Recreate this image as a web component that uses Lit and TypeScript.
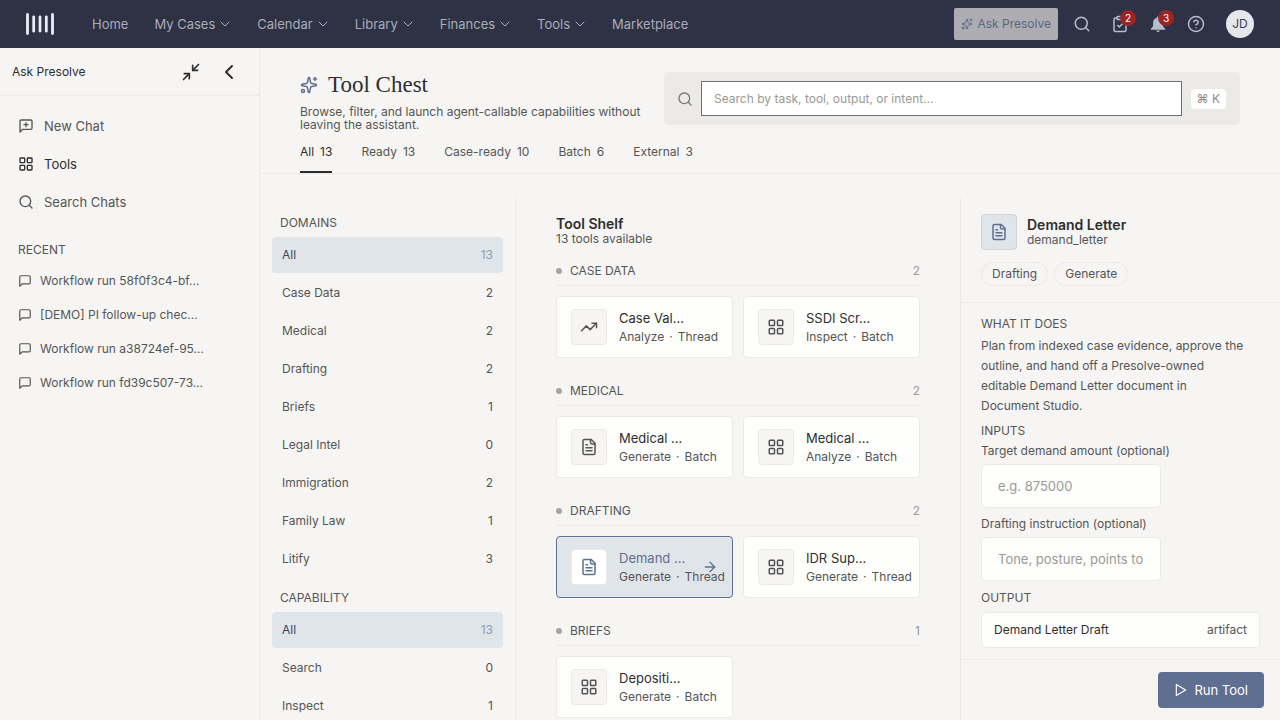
import { LitElement, html, css, svg, nothing } from "lit";
import { customElement, property, state } from "lit/decorators.js";
import { classMap } from "lit/directives/class-map.js";

const ICONS: Record<string, unknown> = {
  chevronDown: svg`<path d="m4 8 8 8 8-8"/>`,
  chevronLeft: svg`<path d="m15 18-6-6 6-6"/>`,
  sparkles: svg`<path d="M11.017 2.814a1 1 0 0 1 1.966 0l1.051 5.558a2 2 0 0 0 1.594 1.594l5.558 1.051a1 1 0 0 1 0 1.966l-5.558 1.051a2 2 0 0 0-1.594 1.594l-1.051 5.558a1 1 0 0 1-1.966 0l-1.051-5.558a2 2 0 0 0-1.594-1.594l-5.558-1.051a1 1 0 0 1 0-1.966l5.558-1.051a2 2 0 0 0 1.594-1.594z"/><path d="M20 2v4"/><path d="M22 4h-4"/><circle cx="4" cy="20" r="2"/>`,
  search: svg`<circle cx="11" cy="11" r="8"/><path d="m21 21-4.3-4.3"/>`,
  clipboard: svg`<rect x="8" y="2" width="8" height="4" rx="1"/><path d="M16 4h2a2 2 0 0 1 2 2v14a2 2 0 0 1-2 2H6a2 2 0 0 1-2-2V6a2 2 0 0 1 2-2h2"/><path d="m9 14 2 2 4-4"/>`,
  bell: svg`<path fill="currentColor" stroke="none" d="M12 2a1.6 1.6 0 0 0-1.6 1.7C7.500 4.400 5.500 7 5.500 10v5L2.500 18.200V19.500h19v-1.300L18.500 15v-5c0-3-2-5.600-4.900-6.300A1.600 1.600 0 0 0 12 2zM9.800 20.500a2.200 2.200 0 0 0 4.400 0z"/>`,
  help: svg`<circle cx="12" cy="12" r="10"/><path d="M9.090 9a3 3 0 0 1 5.830 1c0 2-3 3-3 3"/><path d="M12 17h.01"/>`,
  minimize: svg`<path d="M4 14h6v6"/><path d="M20 10h-6V4"/><path d="m14 10 7-7"/><path d="m3 21 7-7"/>`,
  newChat: svg`<path d="M21 15a2 2 0 0 1-2 2H7l-4 4V5a2 2 0 0 1 2-2h14a2 2 0 0 1 2 2z"/><path d="M12 7v6"/><path d="M9 10h6"/>`,
  chat: svg`<path d="M21 15a2 2 0 0 1-2 2H7l-4 4V5a2 2 0 0 1 2-2h14a2 2 0 0 1 2 2z"/>`,
  grid: svg`<rect x="3" y="3" width="7" height="7" rx="1"/><rect x="14" y="3" width="7" height="7" rx="1"/><rect x="14" y="14" width="7" height="7" rx="1"/><rect x="3" y="14" width="7" height="7" rx="1"/>`,
  trend: svg`<path d="M16 7h6v6"/><path d="m22 7-8.500 8.500-5-5L2 17"/>`,
  file: svg`<path d="M15 2H6a2 2 0 0 0-2 2v16a2 2 0 0 0 2 2h12a2 2 0 0 0 2-2V7z"/><path d="M14 2v4a2 2 0 0 0 2 2h4"/><path d="M10 9H8"/><path d="M16 13H8"/><path d="M16 17H8"/>`,
  arrow: svg`<path d="M5 12h14"/><path d="m12 5 7 7-7 7"/>`,
  play: svg`<path d="M4 2.500v19l16-9.500z"/>`,
};

@customElement("ui-icon")
export class UiIcon extends LitElement {
  @property() name = "grid";
  @property({ type: Number }) size = 16;
  @property({ type: Number }) weight = 2;

  static styles = css`
    :host { display: inline-flex; flex: none; }
    svg { display: block; fill: none; stroke: currentColor; stroke-linecap: round; stroke-linejoin: round; }
  `;

  render() {
    return html`<svg width=${this.size} height=${this.size} viewBox="0 0 24 24" stroke-width=${this.weight} aria-hidden="true">${ICONS[this.name]}</svg>`;
  }
}

type Row = [label: string, count: number];
type Tool = { icon: string; title: string; kind: string; mode: string };

const NAV: [string, boolean][] = [
  ["Home", false], ["My Cases", true], ["Calendar", true], ["Library", true],
  ["Finances", true], ["Tools", true], ["Marketplace", false],
];
const RECENT = ["Workflow run 58f0f3c4-bf…", "[DEMO] PI follow-up chec…", "Workflow run a38724ef-95…", "Workflow run fd39c507-73…"];
const TABS: Row[] = [["All", 13], ["Ready", 13], ["Case-ready", 10], ["Batch", 6], ["External", 3]];
const DOMAINS: Row[] = [["All", 13], ["Case Data", 2], ["Medical", 2], ["Drafting", 2], ["Briefs", 1], ["Legal Intel", 0], ["Immigration", 2], ["Family Law", 1], ["Litify", 3]];
const CAPABILITIES: Row[] = [["All", 13], ["Search", 0], ["Inspect", 1]];
const SHELF: { name: string; tools: Tool[] }[] = [
  { name: "Case Data", tools: [
    { icon: "trend", title: "Case Val…", kind: "Analyze", mode: "Thread" },
    { icon: "grid", title: "SSDI Scr…", kind: "Inspect", mode: "Batch" } ] },
  { name: "Medical", tools: [
    { icon: "file", title: "Medical …", kind: "Generate", mode: "Batch" },
    { icon: "grid", title: "Medical …", kind: "Analyze", mode: "Batch" } ] },
  { name: "Drafting", tools: [
    { icon: "file", title: "Demand …", kind: "Generate", mode: "Thread" },
    { icon: "grid", title: "IDR Sup…", kind: "Generate", mode: "Thread" } ] },
  { name: "Briefs", tools: [
    { icon: "grid", title: "Depositi…", kind: "Generate", mode: "Batch" } ] },
];

@customElement("app-root")
export class AppRoot extends LitElement {
  @state() private tab = "All";
  @state() private domain = "All";
  @state() private capability = "All";
  @state() private selected = "Drafting/0";

  static styles = css`
    :host {
      --ink: #2e2e2e;
      --text: #555555;
      --line: #ebeae8;
      --blue: #5f6f92;
      --tint: #e0e5ea;
      display: flex;
      flex-direction: column;
      height: 100vh;
      overflow: hidden;
      background: #f6f5f3;
      color: var(--text);
      font: 400 13px/20px Inter, "Liberation Sans", sans-serif;
    }
    *, *::before, *::after { box-sizing: border-box; }
    h1, h2, h3, p, ul { margin: 0; padding: 0; font-weight: 400; }
    ul { list-style: none; }
    a { color: inherit; text-decoration: none; }
    button, input { font: inherit; color: inherit; margin: 0; }
    button { border: 0; padding: 0; background: none; text-align: left; cursor: pointer; }

    .topbar { display: flex; align-items: center; flex: none; height: 48px; padding: 0 26px 0 25px; background: #2e3244; color: #a9acb8; }
    .logo { display: flex; width: 30px; margin-right: 37px; }
    .nav { display: flex; flex: 1; gap: 26px; }
    .nav-link { display: flex; align-items: center; gap: 4px; }
    .actions { display: flex; align-items: center; gap: 18px; }
    .ask { display: flex; align-items: center; gap: 4px; height: 32px; padding: 0 7px; border-radius: 2px; background: #acacb2; color: #5c6783; font-size: 12px; margin-right: -4px; }
    .icon-btn { position: relative; display: flex; width: 20px; height: 20px; align-items: center; justify-content: center; color: #b5bccb; }
    .badge { position: absolute; left: 10px; top: -4px; width: 16px; height: 16px; border-radius: 50%; background: #9a2527; color: #fff; font-size: 10px; line-height: 16px; text-align: center; }
    .avatar { display: flex; align-items: center; justify-content: center; width: 28px; height: 28px; margin-left: 2px; border-radius: 50%; background: #e4e8ed; color: #3a3f52; font-size: 12px; }

    .body { display: flex; flex: 1; min-height: 0; }
    .sidebar { flex: none; width: 260px; border-right: 1px solid var(--line); }
    .side-head { display: flex; align-items: center; gap: 16px; height: 48px; padding: 0 18px 0 12px; border-bottom: 1px solid var(--line); color: var(--ink); }
    .side-title { flex: 1; font-size: 12px; }
    .side-btn { display: flex; }
    .side-nav { display: grid; gap: 2px; padding: 12px 18px 0; }
    .side-link { display: flex; align-items: center; gap: 10px; height: 36px; }
    .current { color: var(--ink); }
    .caps { font-size: 12px; line-height: 16px; text-transform: uppercase; }
    .recent-label { padding: 22px 18px 6px; }
    .recent-link { display: flex; align-items: center; gap: 8px; height: 34px; padding: 0 18px; font-size: 12px; }

    .main { display: flex; flex-direction: column; flex: 1; min-width: 0; }
    .page-head { padding: 24px 40px 0; border-bottom: 1px solid var(--line); }
    .head-row { display: grid; grid-template-columns: minmax(0, 1fr) 576px; align-items: start; }
    .title { display: flex; align-items: center; gap: 10px; height: 26px; color: var(--ink); font: 400 23px/26px "Liberation Serif", serif; }
    .title ui-icon, .picked ui-icon { color: var(--blue); }
    .subtitle { margin-top: 7px; font-size: 12px; line-height: 13px; }
    .searchbar { display: flex; align-items: center; height: 53px; padding: 0 14px 0 13px; border-radius: 4px; background: #ebeae6; color: #77777a; }
    .search-input { flex: 1; min-width: 0; height: 35px; margin: 0 9px 0 8px; padding: 0 12px; border: 1px solid #6b6f7d; border-radius: 0; background: #fff; outline: none; font-size: 12px; }
    input::placeholder { color: #9b9995; opacity: 1; }
    .kbd { padding: 0 6px; border-radius: 4px; background: #fff; font: inherit; font-size: 12px; line-height: 20px; color: #8c8a87; }
    .tabs { display: flex; gap: 29px; margin-top: 1px; }
    .tab { display: flex; gap: 6px; padding: 10px 0 9px; border-bottom: 2px solid transparent; font-size: 12px; }
    .tab.on { color: var(--ink); border-color: var(--ink); }

    .columns { display: grid; grid-template-columns: 256px minmax(0, 1fr) 320px; flex: 1; min-height: 0; padding-top: 24px; }
    .filters { min-height: 0; overflow: hidden; padding: 17px 12px 0; border-right: 1px solid var(--line); }
    .filters .caps { padding-left: 8px; }
    .filter-list { display: grid; gap: 2px; margin: 6px 0 13px; }
    .filter { display: flex; align-items: center; justify-content: space-between; width: 100%; height: 36px; padding: 0 10px; border-radius: 4px; font-size: 12px; }
    .filter.on { background: var(--tint); color: #3f465c; }
    .filter.on .count { color: #8f9bb3; }

    .shelf { min-height: 0; overflow: hidden; padding: 18px 40px 0; }
    .strong { color: var(--ink); font-size: 14px; line-height: 16px; font-weight: 600; }
    .sub { font-size: 12px; line-height: 14px; }
    .group { margin-bottom: 25px; }
    .shelf .sub { margin-bottom: 17px; }
    .group-head { display: flex; align-items: center; gap: 8px; height: 23px; padding-bottom: 7px; border-bottom: 1px solid var(--line); }
    .dot { width: 6px; height: 6px; border-radius: 50%; background: #a5a4a2; }
    .group-name { flex: 1; }
    .group-count { color: #9b9995; font-size: 12px; }
    .cards { display: grid; grid-template-columns: repeat(2, minmax(0, 1fr)); gap: 10px; margin-top: 10px; }
    .card { display: flex; align-items: center; gap: 12px; height: 62px; padding: 0 14px; border: 1px solid var(--line); border-radius: 4px; background: #fefefd; white-space: nowrap; }
    .tile { display: flex; flex: none; align-items: center; justify-content: center; width: 36px; height: 36px; border: 1px solid var(--line); border-radius: 4px; background: #f6f5f3; }
    .card-text { display: block; flex: 1; min-width: 0; }
    .card-title { display: block; color: var(--ink); font-size: 13px; line-height: 20px; }
    .card-meta { display: flex; gap: 5px; font-size: 12px; line-height: 18px; }
    .card.on { background: var(--tint); border-color: var(--blue); }
    .card.on .tile { background: #fff; }
    .card.on .card-title, .go { color: var(--blue); }

    .detail { display: flex; flex-direction: column; min-height: 0; border-left: 1px solid var(--line); }
    .detail-head { padding: 16px 20px; border-bottom: 1px solid var(--line); }
    .picked { display: flex; align-items: center; gap: 10px; }
    .picked .tile { background: var(--tint); border-color: #cdd4dc; }
    .chips { display: flex; gap: 6px; margin-top: 12px; }
    .chip { padding: 0 10px; border: 1px solid var(--line); border-radius: 12px; font-size: 12px; line-height: 22px; }
    .detail-body { flex: 1; min-height: 0; overflow: hidden; padding: 13px 20px 0; }
    .desc { margin: 4px 0 7px; padding-right: 14px; font-size: 12px; line-height: 20px; }
    .label { display: block; margin-top: 2px; font-size: 12px; line-height: 20px; }
    .field { display: block; width: 180px; height: 44px; margin: 3px 0 6px; padding: 0 16px; border: 1px solid var(--line); border-radius: 4px; background: #fefefd; outline: none; font-size: 13px; }
    .output-label { margin-top: 9px; }
    .output { display: flex; justify-content: space-between; align-items: center; height: 36px; margin-top: 6px; padding: 0 12px; border: 1px solid var(--line); border-radius: 4px; background: #fefefd; font-size: 12px; }
    .output-name { color: var(--ink); }
    .detail-foot { display: flex; justify-content: flex-end; padding: 12px 16px; border-top: 1px solid var(--line); }
    .run { display: flex; align-items: center; gap: 6px; height: 36px; padding: 0 16px; border-radius: 4px; background: var(--blue); color: #fff; }
  `;

  private filterList(rows: Row[], active: string, pick: (name: string) => void) {
    return html`<div class="filter-list">
      ${rows.map(([name, count]) => html`
        <button class=${classMap({ filter: true, on: name === active })} @click=${() => pick(name)}>
          <span>${name}</span><span class="count">${count}</span>
        </button>`)}
    </div>`;
  }

  private card(tool: Tool, id: string) {
    const on = this.selected === id;
    return html`<button class=${classMap({ card: true, on })} @click=${() => (this.selected = id)}>
      <span class=${classMap({ tile: true, go: on })}><ui-icon name=${tool.icon} size="18"></ui-icon></span>
      <span class="card-text">
        <span class="card-title">${tool.title}</span>
        <span class="card-meta"><span>${tool.kind}</span><span>·</span><span>${tool.mode}</span></span>
      </span>
      ${on ? html`<ui-icon class="go" name="arrow" size="16"></ui-icon>` : nothing}
    </button>`;
  }

  render() {
    return html`
      <header class="topbar">
        <a class="logo" href="#" aria-label="Presolve">
          <svg width="30" height="24" viewBox="0 0 30 24" stroke="#e9edf5" stroke-linecap="round" fill="none">
            <path stroke-width="2.800" d="M2.500 2.400v19.200M27.500 2.400v19.200"/>
            <path stroke-width="2.800" d="M8.700 4.800v14.400M15 5v14M21.300 4.800v14.400"/>
          </svg>
        </a>
        <nav class="nav">
          ${NAV.map(([name, menu]) => html`<a class="nav-link" href="#">${name}${menu ? html`<ui-icon name="chevronDown" size="12"></ui-icon>` : nothing}</a>`)}
        </nav>
        <div class="actions">
          <button class="ask"><ui-icon name="sparkles" size="12"></ui-icon>Ask Presolve</button>
          <button class="icon-btn" aria-label="Search"><ui-icon name="search" size="18"></ui-icon></button>
          <button class="icon-btn" aria-label="Tasks"><ui-icon name="clipboard" size="18"></ui-icon><span class="badge">2</span></button>
          <button class="icon-btn" aria-label="Notifications"><ui-icon name="bell" size="18"></ui-icon><span class="badge">3</span></button>
          <button class="icon-btn" aria-label="Help"><ui-icon name="help" size="18"></ui-icon></button>
          <button class="avatar">JD</button>
        </div>
      </header>
      <div class="body">
        <aside class="sidebar">
          <div class="side-head">
            <span class="side-title">Ask Presolve</span>
            <button class="side-btn" aria-label="Minimize"><ui-icon name="minimize" size="20"></ui-icon></button>
            <button class="side-btn" aria-label="Collapse"><ui-icon name="chevronLeft" size="24"></ui-icon></button>
          </div>
          <nav class="side-nav">
            <a class="side-link" href="#"><ui-icon name="newChat"></ui-icon>New Chat</a>
            <a class="side-link current" href="#"><ui-icon name="grid"></ui-icon>Tools</a>
            <a class="side-link" href="#"><ui-icon name="search"></ui-icon>Search Chats</a>
          </nav>
          <h2 class="caps recent-label">Recent</h2>
          <ul>
            ${RECENT.map((name) => html`<li><a class="recent-link" href="#"><ui-icon name="chat" size="14"></ui-icon>${name}</a></li>`)}
          </ul>
        </aside>
        <main class="main">
          <div class="page-head">
            <div class="head-row">
              <div>
                <h1 class="title"><ui-icon name="sparkles" size="18"></ui-icon>Tool Chest</h1>
                <p class="subtitle">Browse, filter, and launch agent-callable capabilities without leaving the assistant.</p>
              </div>
              <div class="searchbar">
                <ui-icon name="search" size="16"></ui-icon>
                <input class="search-input" type="text" aria-label="Search tools" placeholder="Search by task, tool, output, or intent…">
                <kbd class="kbd">⌘ K</kbd>
              </div>
            </div>
            <div class="tabs">
              ${TABS.map(([name, count]) => html`
                <button class=${classMap({ tab: true, on: name === this.tab })} @click=${() => (this.tab = name)}>
                  <span>${name}</span><span>${count}</span>
                </button>`)}
            </div>
          </div>
          <div class="columns">
            <section class="filters">
              <h2 class="caps">Domains</h2>
              ${this.filterList(DOMAINS, this.domain, (n) => (this.domain = n))}
              <h2 class="caps">Capability</h2>
              ${this.filterList(CAPABILITIES, this.capability, (n) => (this.capability = n))}
            </section>
            <section class="shelf">
              <h2 class="strong">Tool Shelf</h2>
              <p class="sub">13 tools available</p>
              ${SHELF.map((group) => html`
                <div class="group">
                  <div class="group-head">
                    <span class="dot"></span>
                    <h3 class="caps group-name">${group.name}</h3>
                    <span class="group-count">${group.tools.length}</span>
                  </div>
                  <div class="cards">${group.tools.map((tool, i) => this.card(tool, `${group.name}/${i}`))}</div>
                </div>`)}
            </section>
            <section class="detail">
              <div class="detail-head">
                <div class="picked">
                  <span class="tile"><ui-icon name="file" size="18"></ui-icon></span>
                  <div>
                    <h2 class="strong">Demand Letter</h2>
                    <p class="sub">demand_letter</p>
                  </div>
                </div>
                <div class="chips"><span class="chip">Drafting</span><span class="chip">Generate</span></div>
              </div>
              <div class="detail-body">
                <h3 class="caps">What it does</h3>
                <p class="desc">Plan from indexed case evidence, approve the outline, and hand off a Presolve-owned editable Demand Letter document in Document Studio.</p>
                <h3 class="caps">Inputs</h3>
                <label class="label" for="amount">Target demand amount (optional)</label>
                <input class="field" id="amount" type="text" placeholder="e.g. 875000">
                <label class="label" for="instruction">Drafting instruction (optional)</label>
                <input class="field" id="instruction" type="text" placeholder="Tone, posture, points to cover">
                <h3 class="caps output-label">Output</h3>
                <div class="output"><span class="output-name">Demand Letter Draft</span><span>artifact</span></div>
              </div>
              <div class="detail-foot"><button class="run"><ui-icon name="play" size="14"></ui-icon>Run Tool</button></div>
            </section>
          </div>
        </main>
      </div>
    `;
  }
}
